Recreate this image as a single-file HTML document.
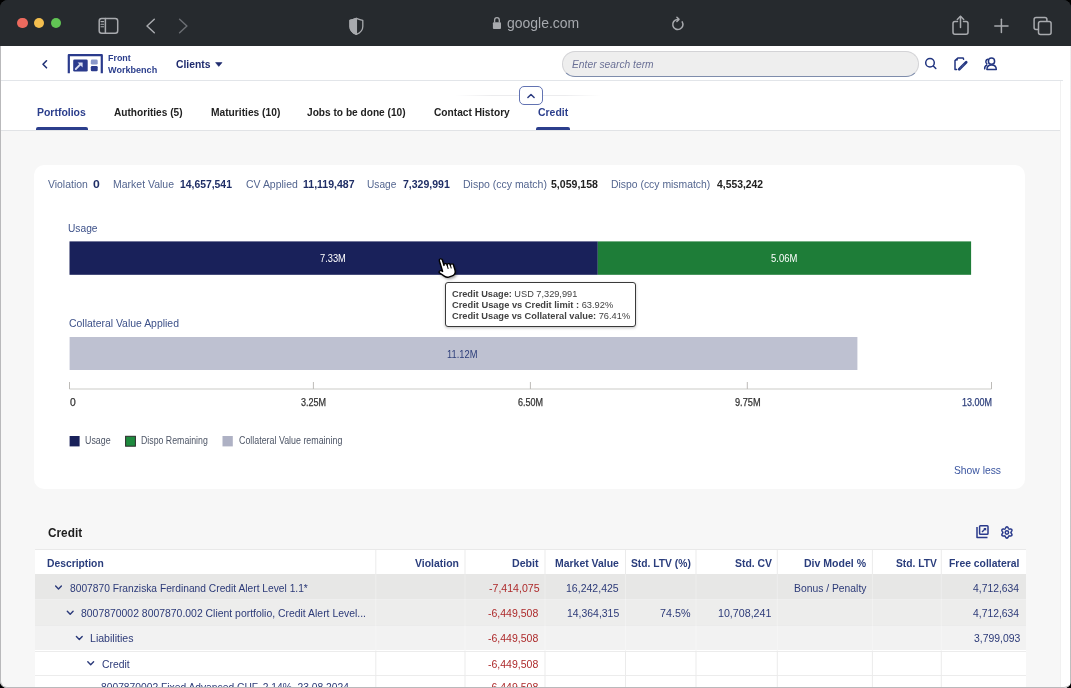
<!DOCTYPE html>
<html><head><meta charset="utf-8"><style>
html,body{margin:0;padding:0;}
body{width:1071px;height:688px;overflow:hidden;background:#000;font-family:"Liberation Sans",sans-serif;position:relative;}
#win{position:absolute;left:0;top:0;width:1071px;height:688px;background:#262a2e;border-radius:8px 8px 7px 7px;overflow:hidden;}
#win:after{content:"";position:absolute;left:0;top:46px;right:0;bottom:0;border:1px solid #b9b9bb;border-top:none;border-right-color:transparent;border-radius:0 0 7px 7px;pointer-events:none;z-index:5;}
.a{position:absolute;}
.t{position:absolute;white-space:nowrap;line-height:normal;transform-origin:0 0;}
.t b{font-weight:700;}

#rb{position:absolute;left:1070px;top:46px;width:1px;height:636px;background:linear-gradient(180deg,#efefef 0%,#e6e6e6 25%,#cfcfcf 55%,#bdbdbd 100%);z-index:6;}

</style></head><body>
<div id="win">
<div class="a" style="left:0;top:46px;width:1071px;height:642px;background:#f7f7f7;"></div>
<!-- browser bar -->
<div class="a" style="left:0;top:0;width:1071px;height:46px;background:#262a2e;"></div>
<div class="a" style="left:17.3px;top:17.7px;width:10.4px;height:10.4px;border-radius:50%;background:#ec6a5e;"></div>
<div class="a" style="left:34.1px;top:17.7px;width:10.4px;height:10.4px;border-radius:50%;background:#f4bf4f;"></div>
<div class="a" style="left:50.8px;top:17.7px;width:10.4px;height:10.4px;border-radius:50%;background:#61c554;"></div>
<svg class="a" style="left:0;top:0" width="1071" height="46" viewBox="0 0 1071 46">
  <g fill="none" stroke="#a8aaae" stroke-width="1.5" stroke-linecap="round" stroke-linejoin="round">
    <rect x="99.2" y="18.5" width="18.5" height="14.7" rx="2.5"/>
    <line x1="105.4" y1="18.5" x2="105.4" y2="33.2"/>
    <line x1="101" y1="21.6" x2="103.6" y2="21.6" stroke-width="1.1"/>
    <line x1="101" y1="24.2" x2="103.6" y2="24.2" stroke-width="1.1"/>
    <line x1="101" y1="26.8" x2="103.6" y2="26.8" stroke-width="1.1"/>
    <polyline points="154.3,19.3 147,26 154.3,32.7"/>
    <polyline points="179.6,19.3 186.9,26 179.6,32.7" stroke="#6b6e73"/>
    <!-- refresh -->
    <path d="M682.2,21.8 A5.1,5.1 0 1 1 677.4,19.4" />
    <polyline points="676.9,17.3 679,19.4 676.9,21.5" />
    <!-- share -->
    <path d="M957.5,21.5 H955 a2,2 0 0 0 -2,2 V32.3 a2,2 0 0 0 2,2 H966 a2,2 0 0 0 2,-2 V23.5 a2,2 0 0 0 -2,-2 H963.5"/>
    <line x1="960.5" y1="16.5" x2="960.5" y2="27.5"/>
    <polyline points="957.3,19.5 960.5,16.3 963.7,19.5"/>
    <!-- plus -->
    <line x1="1001.4" y1="19.2" x2="1001.4" y2="32.6"/>
    <line x1="994.8" y1="25.9" x2="1008" y2="25.9"/>
    <!-- tabs -->
    <path d="M1037.7,29.5 h-1.6 a2,2 0 0 1 -2,-2 V19.4 a2,2 0 0 1 2,-2 H1044.9 a2,2 0 0 1 2,2 V21"/>
    <rect x="1038.5" y="21.4" width="12.6" height="13" rx="2"/>
  </g>
  <!-- shield -->
  <path d="M356.4,18.3 C354.2,19.2 352.3,19.9 350,20.4 V26.5 C350,30.3 352.8,32.9 356.4,34.4 C360,32.9 362.8,30.3 362.8,26.5 V20.4 C360.5,19.9 358.6,19.2 356.4,18.3 Z" fill="none" stroke="#a8aaae" stroke-width="1.3" stroke-linejoin="round"/>
  <path d="M356.4,18.3 C354.2,19.2 352.3,19.9 350,20.4 V26.5 C350,30.3 352.8,32.9 356.4,34.4 Z" fill="#a8aaae" stroke="#a8aaae" stroke-width="1.3" stroke-linejoin="round"/>
  <!-- lock -->
  <rect x="492.9" y="22.3" width="8.1" height="6.8" rx="1" fill="#a8aaae"/>
  <path d="M494.6,22.5 V20 a2.35,2.35 0 0 1 4.7,0 V22.5" fill="none" stroke="#a8aaae" stroke-width="1.3"/>
</svg>

<!-- app header -->
<div class="a" style="left:1px;top:46px;width:1069px;height:34px;background:#fff;"></div>
<div class="a" style="left:1px;top:79.6px;width:1062px;height:1.6px;background:#e2e5e9;"></div>
<svg class="a" style="left:0;top:46px" width="1071" height="36" viewBox="0 46 1071 36">
  <polyline points="46.5,60.8 43,64.3 46.5,67.8" fill="none" stroke="#223377" stroke-width="1.6" stroke-linecap="round" stroke-linejoin="round"/>
  <!-- logo -->
  <path d="M68.8,73.2 V55.2 H101.8 V73.2" fill="none" stroke="#2a3a8c" stroke-width="2.2" stroke-linejoin="round"/>
  <rect x="73.2" y="59.4" width="14.5" height="12.1" rx="1.3" fill="#2a3a8c"/>
  <path d="M75.8,69 L80.6,64.2" fill="none" stroke="#d8dcef" stroke-width="1.9" stroke-linecap="round"/><path d="M77.6,62.4 H82.6 V67.4 Z" fill="#d8dcef"/>
  <rect x="90.8" y="59.6" width="6.9" height="4.9" rx="1.3" fill="#8a98c9"/>
  <rect x="90.8" y="66.0" width="6.9" height="5.3" rx="1.3" fill="#2a3a8c"/>
  <!-- clients triangle -->
  <path d="M215.6,62.6 H222 L218.8,66.4 Z" fill="#1f2b6e" stroke="#1f2b6e" stroke-width="0.6" stroke-linejoin="round"/>
</svg>
<div class="a" style="left:562px;top:51px;width:357px;height:26px;border-radius:13px;background:#eeeeee;border:1px solid #d3d3d6;border-bottom:1px solid #7e8cab;box-sizing:border-box;"></div>
<svg class="a" style="left:900px;top:46px" width="120" height="36" viewBox="900 46 120 36">
  <g fill="none" stroke="#223580" stroke-width="1.5" stroke-linecap="round" stroke-linejoin="round">
    <circle cx="930" cy="62.7" r="4.3"/>
    <line x1="933.3" y1="66" x2="935.8" y2="68.5"/>
    <!-- edit doc -->
    <path d="M956.6,69.4 H955 V60.6 L957.8,58 H963.2 L963.6,59.2"/>
    <!-- people -->
    <circle cx="991.5" cy="61.2" r="3.1"/>
    <path d="M986.9,69.4 C986.9,66.6 988.9,64.9 991.6,64.9 C994.3,64.9 996.3,66.6 996.3,69.4 Z"/>
    <path d="M987.8,59.3 A2.5,2.5 0 0 0 986.9,63.8 M984.7,68.8 C984.5,67 985.3,65.8 986.7,65.2"/>
  </g>
  <path d="M955,60.6 L957.8,58 V60.6 Z" fill="#223580"/>
  <line x1="959.2" y1="69.2" x2="966.2" y2="62.3" stroke="#223580" stroke-width="2.7" stroke-linecap="round"/>
  <line x1="960.4" y1="68" x2="965" y2="63.5" stroke="#8d97c4" stroke-width="0.7" stroke-dasharray="1.2 0.9"/>
</svg>
<!-- tab bar -->
<div class="a" style="left:1px;top:81.3px;width:1059px;height:49px;background:#fff;"></div>
<div class="a" style="left:1px;top:130px;width:1059px;height:1.2px;background:#e1e3e6;"></div>
<div class="a" style="left:455px;top:95.3px;width:146px;height:1px;background:linear-gradient(90deg,rgba(230,230,232,0),#ececee 25%,#ececee 75%,rgba(230,230,232,0));"></div>
<div class="a" style="left:519.2px;top:86.4px;width:23.4px;height:18.8px;border:1.2px solid #6273b2;border-radius:5px;background:#fff;box-sizing:border-box;"></div>
<svg class="a" style="left:519px;top:86px" width="24" height="20" viewBox="519 86 24 20">
  <polyline points="527.9,97.5 531,94.5 534.1,97.5" fill="none" stroke="#2b3b80" stroke-width="1.5" stroke-linecap="round" stroke-linejoin="round"/>
</svg>
<div class="a" style="left:35.6px;top:127.2px;width:52px;height:2.8px;background:#2b3e8c;border-radius:2px 2px 0 0;"></div>
<div class="a" style="left:535.8px;top:127.2px;width:34.7px;height:2.8px;background:#2b3e8c;border-radius:2px 2px 0 0;"></div>

<!-- scrollbar strip right -->
<div class="a" style="left:1060px;top:46px;width:10px;height:642px;background:#fff;"></div>
<div class="a" style="left:1060px;top:81px;width:1px;height:607px;background:#f1f1f1;"></div>
<div class="a" style="left:1060px;top:79.6px;width:3px;height:1.6px;background:#e2e5e9;"></div>
<div id="rb"></div>

<!-- card -->
<div class="a" style="left:34px;top:165px;width:991px;height:324px;background:#fff;border-radius:10px;"></div>
<svg class="a" style="left:0;top:230px" width="1071" height="230" viewBox="0 230 1071 230">
  <rect x="69.5" y="241.4" width="528.3" height="33.4" fill="#19215a"/>
  <rect x="597.8" y="241.4" width="373.3" height="33.4" fill="#1e7d38"/>
  <rect x="69.6" y="337" width="787.8" height="33" fill="#bec1d1"/>
  <line x1="69.5" y1="388.9" x2="991.5" y2="388.9" stroke="#dddcda" stroke-width="1.5"/>
  <g stroke="#bdbbb8" stroke-width="1">
    <line x1="69.5" y1="382" x2="69.5" y2="389"/>
    <line x1="313.4" y1="382" x2="313.4" y2="389"/>
    <line x1="530.4" y1="382" x2="530.4" y2="389"/>
    <line x1="747.3" y1="382" x2="747.3" y2="389"/>
    <line x1="991.5" y1="382" x2="991.5" y2="389"/>
  </g>
  <rect x="69.6" y="436" width="10" height="10.4" fill="#19215a"/>
  <rect x="125.6" y="436.3" width="9.8" height="9.9" fill="#1e8a3e" stroke="#2a2a2a" stroke-width="1"/>
  <rect x="222.5" y="436" width="10.3" height="10.4" fill="#aeb1c4"/>
</svg>

<!-- tooltip -->
<div class="a" style="left:445.3px;top:282px;width:190.7px;height:44.5px;background:#fff;border:1px solid #3a3a3a;border-radius:3px;box-sizing:border-box;box-shadow:0 1px 3px rgba(0,0,0,0.25);"></div>

<!-- table -->
<svg class="a" style="left:960px;top:520px" width="60" height="24" viewBox="960 520 60 24">
  <g fill="none" stroke="#2a3a8c" stroke-width="1.5" stroke-linejoin="round">
    <rect x="979.6" y="525.8" width="8.4" height="8.4" rx="0.8"/>
    <path d="M977,527 V537.5 H987.5"/>
    <path d="M982,532 L985.5,528.5"/>
    <path d="M1010.90,532.50 L1010.96,532.77 L1011.11,533.05 L1011.34,533.38 L1011.58,533.76 L1011.80,534.16 L1011.94,534.59 L1011.95,534.99 L1011.84,535.35 L1011.59,535.63 L1011.22,535.82 L1010.79,535.91 L1010.33,535.93 L1009.88,535.90 L1009.49,535.87 L1009.16,535.88 L1008.90,535.96 L1008.70,536.15 L1008.53,536.43 L1008.35,536.78 L1008.16,537.18 L1007.91,537.58 L1007.61,537.90 L1007.27,538.12 L1006.90,538.20 L1006.53,538.12 L1006.19,537.90 L1005.89,537.58 L1005.64,537.18 L1005.45,536.78 L1005.27,536.43 L1005.10,536.15 L1004.90,535.96 L1004.64,535.88 L1004.31,535.87 L1003.92,535.90 L1003.47,535.93 L1003.01,535.91 L1002.58,535.82 L1002.21,535.63 L1001.96,535.35 L1001.85,534.99 L1001.86,534.59 L1002.00,534.16 L1002.22,533.76 L1002.46,533.38 L1002.69,533.05 L1002.84,532.77 L1002.90,532.50 L1002.84,532.23 L1002.69,531.95 L1002.46,531.62 L1002.22,531.24 L1002.00,530.84 L1001.86,530.41 L1001.85,530.01 L1001.96,529.65 L1002.21,529.37 L1002.58,529.18 L1003.01,529.09 L1003.47,529.07 L1003.92,529.10 L1004.31,529.13 L1004.64,529.12 L1004.90,529.04 L1005.10,528.85 L1005.27,528.57 L1005.45,528.22 L1005.64,527.82 L1005.89,527.42 L1006.19,527.10 L1006.53,526.88 L1006.90,526.80 L1007.27,526.88 L1007.61,527.10 L1007.91,527.42 L1008.16,527.82 L1008.35,528.22 L1008.53,528.57 L1008.70,528.85 L1008.90,529.04 L1009.16,529.12 L1009.49,529.13 L1009.88,529.10 L1010.33,529.07 L1010.79,529.09 L1011.22,529.18 L1011.59,529.37 L1011.84,529.65 L1011.95,530.01 L1011.94,530.41 L1011.80,530.84 L1011.58,531.24 L1011.34,531.62 L1011.11,531.95 L1010.96,532.23 Z"/>
    <circle cx="1006.9" cy="532.5" r="1.7"/>
  </g>
  <path d="M983.3,528 H986.2 V530.9 Z" fill="#2a3a8c"/>
</svg>
<div class="a" style="left:35px;top:549px;width:991px;height:139px;background:#fff;border-top:1px solid #e9e9e9;"></div>
<div class="a" style="left:35px;top:574.3px;width:991px;height:25.2px;background:#e7e7e6;"></div>
<div class="a" style="left:35px;top:599.5px;width:991px;height:25.7px;background:#ededec;"></div>
<div class="a" style="left:35px;top:625.2px;width:991px;height:25.3px;background:#f2f2f2;"></div>
<div class="a" style="left:35px;top:650.5px;width:991px;height:1px;background:#ececec;"></div>
<div class="a" style="left:35px;top:675.3px;width:991px;height:1px;background:#ececec;"></div>
<div class="a" style="left:35px;top:599px;width:991px;height:1px;background:#dfdfdf;opacity:.5"></div>
<div class="a" style="left:35px;top:624.8px;width:991px;height:1px;background:#e3e3e3;opacity:.5"></div>
<svg class="a" style="left:0;top:549px" width="1071" height="139" viewBox="0 549 1071 139">
  <g stroke="#ebebeb" stroke-width="1"><line x1="375.8" y1="550" x2="375.8" y2="574.3"/><line x1="375.8" y1="650.5" x2="375.8" y2="688"/><line x1="465" y1="550" x2="465" y2="574.3"/><line x1="465" y1="650.5" x2="465" y2="688"/><line x1="545" y1="550" x2="545" y2="574.3"/><line x1="545" y1="650.5" x2="545" y2="688"/><line x1="625.5" y1="550" x2="625.5" y2="574.3"/><line x1="625.5" y1="650.5" x2="625.5" y2="688"/><line x1="696" y1="550" x2="696" y2="574.3"/><line x1="696" y1="650.5" x2="696" y2="688"/><line x1="777.3" y1="550" x2="777.3" y2="574.3"/><line x1="777.3" y1="650.5" x2="777.3" y2="688"/><line x1="872.4" y1="550" x2="872.4" y2="574.3"/><line x1="872.4" y1="650.5" x2="872.4" y2="688"/><line x1="941.3" y1="550" x2="941.3" y2="574.3"/><line x1="941.3" y1="650.5" x2="941.3" y2="688"/></g>
  <g stroke="rgba(255,255,255,0.3)" stroke-width="1"><line x1="375.8" y1="574.3" x2="375.8" y2="650.5"/><line x1="465" y1="574.3" x2="465" y2="650.5"/><line x1="545" y1="574.3" x2="545" y2="650.5"/><line x1="625.5" y1="574.3" x2="625.5" y2="650.5"/><line x1="696" y1="574.3" x2="696" y2="650.5"/><line x1="777.3" y1="574.3" x2="777.3" y2="650.5"/><line x1="872.4" y1="574.3" x2="872.4" y2="650.5"/><line x1="941.3" y1="574.3" x2="941.3" y2="650.5"/></g>
  <g fill="none" stroke="#2b3a7a" stroke-width="1.4" stroke-linecap="round" stroke-linejoin="round">
    <polyline points="55.6,586 58.5,589 61.4,586"/>
    <polyline points="67.3,611.3 70.2,614.3 73.1,611.3"/>
    <polyline points="76.4,636.6 79.3,639.6 82.2,636.6"/>
    <polyline points="87.8,661.8 90.7,664.8 93.6,661.8"/>
  </g>
</svg>

<!-- cursor -->
<svg class="a" style="left:420px;top:245px" width="50" height="50" viewBox="420 245 50 50">
  <defs><filter id="sh" x="-50%" y="-50%" width="200%" height="200%"><feGaussianBlur stdDeviation="1.5"/></filter></defs>
  <g transform="translate(440.4,258.9) rotate(-17) scale(1.02,0.92) translate(-5.5,0)">
    <path d="M4,1.5 A1.5,1.5 0 0 1 7,1.5 L7,8 A1.5,1.5 0 0 1 10,8 L10,8.8 A1.5,1.5 0 0 1 13,9 L13,10 A1.5,1.5 0 0 1 16,10.5 L16,16 C16,19.5 14,21.5 11,21.5 L8,21.5 C6.5,21.5 5.5,20.8 4.5,19.5 L0.8,14.5 C0.2,13.7 0.4,12.8 1.2,12.4 C2,12 2.8,12.3 3.4,13 L4,13.8 Z" fill="rgba(0,0,0,0.45)" filter="url(#sh)" transform="translate(0.8,2.2)"/>
    <path d="M4,1.5 A1.5,1.5 0 0 1 7,1.5 L7,8 A1.5,1.5 0 0 1 10,8 L10,8.8 A1.5,1.5 0 0 1 13,9 L13,10 A1.5,1.5 0 0 1 16,10.5 L16,16 C16,19.5 14,21.5 11,21.5 L8,21.5 C6.5,21.5 5.5,20.8 4.5,19.5 L0.8,14.5 C0.2,13.7 0.4,12.8 1.2,12.4 C2,12 2.8,12.3 3.4,13 L4,13.8 Z" fill="#fff" stroke="#000" stroke-width="1.4" stroke-linejoin="round"/>
    <path d="M10,9 V12.5 M13,10 V13" stroke="#000" stroke-width="1" stroke-linecap="round"/>
  </g>
</svg>

<div class="t" id="t0" style="left:506.51px;top:15.03px;font-size:14px;font-weight:400;color:#a6a9ae;transform:scaleX(0.9981);">google.com</div>
<div class="t" id="t1" style="left:108.32px;top:52.86px;font-size:9px;font-weight:700;color:#2b3e8c;transform:scaleX(0.9910);">Front</div>
<div class="t" id="t2" style="left:108.06px;top:64.76px;font-size:9px;font-weight:700;color:#2b3e8c;transform:scaleX(1.0067);">Workbench</div>
<div class="t" id="t3" style="left:175.57px;top:58.03px;font-size:10.8px;font-weight:700;color:#1f2b6e;transform:scaleX(0.9585);">Clients</div>
<div class="t" id="t4" style="left:572.32px;top:58.30px;font-size:10.5px;font-weight:400;color:#6b7196;transform:scaleX(0.9782);font-style:italic;">Enter search term</div>
<div class="t" id="t5" style="left:37.47px;top:106.34px;font-size:11px;font-weight:700;color:#2b3e8c;transform:scaleX(0.9511);">Portfolios</div>
<div class="t" id="t6" style="left:113.67px;top:106.34px;font-size:11px;font-weight:700;color:#222;transform:scaleX(0.9191);">Authorities (5)</div>
<div class="t" id="t7" style="left:210.57px;top:106.34px;font-size:11px;font-weight:700;color:#222;transform:scaleX(0.9293);">Maturities (10)</div>
<div class="t" id="t8" style="left:306.87px;top:106.34px;font-size:11px;font-weight:700;color:#222;transform:scaleX(0.9219);">Jobs to be done (10)</div>
<div class="t" id="t9" style="left:434.19px;top:106.34px;font-size:11px;font-weight:700;color:#222;transform:scaleX(0.9249);">Contact History</div>
<div class="t" id="t10" style="left:538.33px;top:106.34px;font-size:11px;font-weight:700;color:#2b3e8c;transform:scaleX(0.9493);">Credit</div>
<div class="t" id="t11" style="left:48.25px;top:178.04px;font-size:11px;font-weight:400;color:#53658f;transform:scaleX(0.9474);">Violation</div>
<div class="t" id="t12" style="left:92.71px;top:178.04px;font-size:11px;font-weight:700;color:#1f2e66;transform:scaleX(1.1074);">0</div>
<div class="t" id="t13" style="left:113.13px;top:178.04px;font-size:11px;font-weight:400;color:#53658f;transform:scaleX(0.9533);">Market Value</div>
<div class="t" id="t14" style="left:179.69px;top:178.04px;font-size:11px;font-weight:700;color:#1f2e66;transform:scaleX(0.9426);">14,657,541</div>
<div class="t" id="t15" style="left:245.62px;top:178.04px;font-size:11px;font-weight:400;color:#53658f;transform:scaleX(0.9523);">CV Applied</div>
<div class="t" id="t16" style="left:302.50px;top:178.04px;font-size:11px;font-weight:700;color:#1f2e66;transform:scaleX(0.9571);">11,119,487</div>
<div class="t" id="t17" style="left:367.27px;top:178.04px;font-size:11px;font-weight:400;color:#53658f;transform:scaleX(0.9224);">Usage</div>
<div class="t" id="t18" style="left:402.96px;top:178.04px;font-size:11px;font-weight:700;color:#1f2e66;transform:scaleX(0.9552);">7,329,991</div>
<div class="t" id="t19" style="left:463.00px;top:178.04px;font-size:11px;font-weight:400;color:#53658f;transform:scaleX(0.9537);">Dispo (ccy match)</div>
<div class="t" id="t20" style="left:551.19px;top:178.04px;font-size:11px;font-weight:700;color:#222;transform:scaleX(0.9585);">5,059,158</div>
<div class="t" id="t21" style="left:611.41px;top:178.04px;font-size:11px;font-weight:400;color:#53658f;transform:scaleX(0.9446);">Dispo (ccy mismatch)</div>
<div class="t" id="t22" style="left:716.76px;top:178.04px;font-size:11px;font-weight:700;color:#222;transform:scaleX(0.9407);">4,553,242</div>
<div class="t" id="t23" style="left:68.23px;top:221.64px;font-size:11px;font-weight:400;color:#3d5189;transform:scaleX(0.9280);">Usage</div>
<div class="t" id="t24" style="left:69.41px;top:317.35px;font-size:11px;font-weight:400;color:#3d5189;transform:scaleX(0.9478);">Collateral Value Applied</div>
<div class="t" id="t25" style="left:320.43px;top:252.30px;font-size:10.5px;font-weight:400;color:#ffffff;transform:scaleX(0.8869);">7.33M</div>
<div class="t" id="t26" style="left:770.84px;top:252.30px;font-size:10.5px;font-weight:400;color:#ffffff;transform:scaleX(0.9004);">5.06M</div>
<div class="t" id="t27" style="left:447.39px;top:347.80px;font-size:10.5px;font-weight:400;color:#2c3e7a;transform:scaleX(0.8878);">11.12M</div>
<div class="t" id="t28" style="left:70.46px;top:395.80px;font-size:10.5px;font-weight:400;color:#333;transform:scaleX(0.9841);-webkit-text-stroke:0.25px;">0</div>
<div class="t" id="t29" style="left:300.73px;top:395.80px;font-size:10.5px;font-weight:400;color:#333;transform:scaleX(0.8615);-webkit-text-stroke:0.25px;">3.25M</div>
<div class="t" id="t30" style="left:518.10px;top:395.80px;font-size:10.5px;font-weight:400;color:#333;transform:scaleX(0.8596);-webkit-text-stroke:0.25px;">6.50M</div>
<div class="t" id="t31" style="left:734.50px;top:395.80px;font-size:10.5px;font-weight:400;color:#333;transform:scaleX(0.8756);-webkit-text-stroke:0.25px;">9.75M</div>
<div class="t" id="t32" style="left:961.78px;top:395.80px;font-size:10.5px;font-weight:400;color:#2c3e7a;transform:scaleX(0.8569);-webkit-text-stroke:0.25px;">13.00M</div>
<div class="t" id="t33" style="left:84.94px;top:435.15px;font-size:10px;font-weight:400;color:#4d5566;transform:scaleX(0.8851);">Usage</div>
<div class="t" id="t34" style="left:141.12px;top:435.15px;font-size:10px;font-weight:400;color:#4d5566;transform:scaleX(0.8773);">Dispo Remaining</div>
<div class="t" id="t35" style="left:238.60px;top:435.15px;font-size:10px;font-weight:400;color:#4d5566;transform:scaleX(0.8866);">Collateral Value remaining</div>
<div class="t" id="t36" style="left:953.92px;top:464.29px;font-size:11.5px;font-weight:400;color:#3a55a0;transform:scaleX(0.8959);">Show less</div>
<div class="t" id="t37" style="left:451.57px;top:288.30px;font-size:9.5px;font-weight:400;color:#424242;transform:scaleX(0.9683);"><b>Credit Usage:</b> USD 7,329,991</div>
<div class="t" id="t38" style="left:451.56px;top:299.30px;font-size:9.5px;font-weight:400;color:#424242;transform:scaleX(0.9784);"><b>Credit Usage vs Credit limit :</b> 63.92%</div>
<div class="t" id="t39" style="left:451.56px;top:310.00px;font-size:9.5px;font-weight:400;color:#424242;transform:scaleX(0.9750);"><b>Credit Usage vs Collateral value:</b> 76.41%</div>
<div class="t" id="t40" style="left:47.75px;top:526.34px;font-size:12px;font-weight:700;color:#1d1d1d;transform:scaleX(0.9838);">Credit</div>
<div class="t" id="t41" style="left:46.52px;top:556.80px;font-size:10.5px;font-weight:700;color:#2a3d7c;transform:scaleX(0.9815);">Description</div>
<div class="t" id="t42" style="left:415.00px;top:556.80px;font-size:10.5px;font-weight:700;color:#2a3d7c;transform:scaleX(0.9942);">Violation</div>
<div class="t" id="t43" style="left:512.42px;top:556.80px;font-size:10.5px;font-weight:700;color:#2a3d7c;transform:scaleX(1.0133);">Debit</div>
<div class="t" id="t44" style="left:555.43px;top:556.80px;font-size:10.5px;font-weight:700;color:#2a3d7c;transform:scaleX(0.9956);">Market Value</div>
<div class="t" id="t45" style="left:631.49px;top:556.80px;font-size:10.5px;font-weight:700;color:#2a3d7c;transform:scaleX(0.9797);">Std. LTV (%)</div>
<div class="t" id="t46" style="left:735.08px;top:556.80px;font-size:10.5px;font-weight:700;color:#2a3d7c;transform:scaleX(0.9923);">Std. CV</div>
<div class="t" id="t47" style="left:804.22px;top:556.80px;font-size:10.5px;font-weight:700;color:#2a3d7c;transform:scaleX(1.0030);">Div Model %</div>
<div class="t" id="t48" style="left:895.52px;top:556.80px;font-size:10.5px;font-weight:700;color:#2a3d7c;transform:scaleX(0.9743);">Std. LTV</div>
<div class="t" id="t49" style="left:949.27px;top:556.80px;font-size:10.5px;font-weight:700;color:#2a3d7c;transform:scaleX(0.9884);">Free collateral</div>
<div class="t" id="t50" style="left:69.58px;top:581.90px;font-size:10.5px;font-weight:400;color:#2c3a78;transform:scaleX(0.9749);">8007870 Franziska Ferdinand Credit Alert Level 1.1*</div>
<div class="t" id="t51" style="left:80.57px;top:607.00px;font-size:10.5px;font-weight:400;color:#2c3a78;transform:scaleX(0.9923);">8007870002 8007870.002 Client portfolio, Credit Alert Level...</div>
<div class="t" id="t52" style="left:89.66px;top:632.40px;font-size:10.5px;font-weight:400;color:#2c3a78;transform:scaleX(1.0080);">Liabilities</div>
<div class="t" id="t53" style="left:101.74px;top:657.50px;font-size:10.5px;font-weight:400;color:#2c3a78;transform:scaleX(0.9897);">Credit</div>
<div class="t" id="t54" style="left:101.33px;top:681.10px;font-size:10.5px;font-weight:400;color:#2c3a78;transform:scaleX(0.9785);">8007870002 Fixed Advanced CHF, 2.14%, 23.08.2024</div>
<div class="t" id="t55" style="left:488.82px;top:581.90px;font-size:10.5px;font-weight:400;color:#ad2a2b;transform:scaleX(1.0069);">-7,414,075</div>
<div class="t" id="t56" style="left:488.43px;top:607.00px;font-size:10.5px;font-weight:400;color:#ad2a2b;transform:scaleX(1.0005);">-6,449,508</div>
<div class="t" id="t57" style="left:488.43px;top:632.40px;font-size:10.5px;font-weight:400;color:#ad2a2b;transform:scaleX(1.0005);">-6,449,508</div>
<div class="t" id="t58" style="left:488.43px;top:657.50px;font-size:10.5px;font-weight:400;color:#ad2a2b;transform:scaleX(1.0005);">-6,449,508</div>
<div class="t" id="t59" style="left:488.43px;top:681.10px;font-size:10.5px;font-weight:400;color:#ad2a2b;transform:scaleX(1.0005);">-6,449,508</div>
<div class="t" id="t60" style="left:566.42px;top:581.90px;font-size:10.5px;font-weight:400;color:#2c3a78;transform:scaleX(1.0029);">16,242,425</div>
<div class="t" id="t61" style="left:566.65px;top:607.00px;font-size:10.5px;font-weight:400;color:#2c3a78;transform:scaleX(0.9937);">14,364,315</div>
<div class="t" id="t62" style="left:660.46px;top:607.00px;font-size:10.5px;font-weight:400;color:#2c3a78;transform:scaleX(1.0237);">74.5%</div>
<div class="t" id="t63" style="left:718.37px;top:607.00px;font-size:10.5px;font-weight:400;color:#2c3a78;transform:scaleX(1.0163);">10,708,241</div>
<div class="t" id="t64" style="left:794.34px;top:581.90px;font-size:10.5px;font-weight:400;color:#2c3a78;transform:scaleX(0.9849);">Bonus / Penalty</div>
<div class="t" id="t65" style="left:973.39px;top:581.90px;font-size:10.5px;font-weight:400;color:#2c3a78;transform:scaleX(0.9858);">4,712,634</div>
<div class="t" id="t66" style="left:973.39px;top:607.00px;font-size:10.5px;font-weight:400;color:#2c3a78;transform:scaleX(0.9858);">4,712,634</div>
<div class="t" id="t67" style="left:973.84px;top:632.40px;font-size:10.5px;font-weight:400;color:#2c3a78;transform:scaleX(0.9919);">3,799,093</div>
</div>
</body></html>
